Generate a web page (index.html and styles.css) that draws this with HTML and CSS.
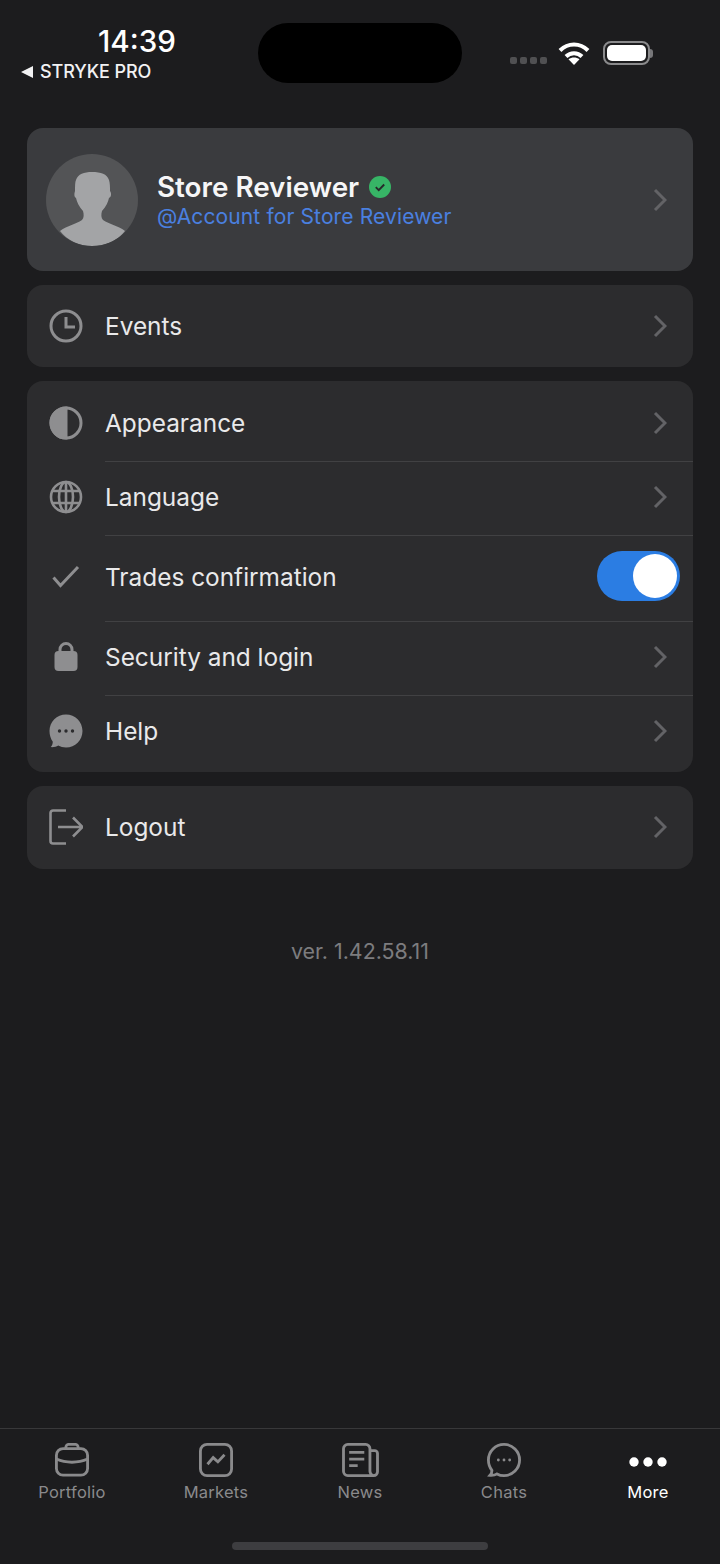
FILE: index.html
```html
<!DOCTYPE html>
<html lang="en">
<head>
  <meta charset="UTF-8">
  <meta name="viewport" content="width=device-width, initial-scale=1.0">
  <title>More</title>
  <link rel="stylesheet" href="styles.css">
</head>
<body>
  <header class="status-bar">
    <div class="status-left">
      <div class="clock">14:39</div>
      <div class="back-app"><span class="back-arrow"></span>STRYKE PRO</div>
    </div>
    <div class="island"></div>
    <div class="status-right">
      <div class="signal"><i></i><i></i><i></i><i></i></div>
      <svg class="wifi" width="32" height="24" viewBox="0 0 32 24" fill="none" stroke="#fff" stroke-width="4">
        <path d="M2 9.500C10 1.500 22 1.500 30 9.500"/>
        <path d="M8 15.500C12.500 11 19.500 11 24 15.500"/>
        <path d="M16 24l-5.500-5.700c3.200-2.400 7.800-2.400 11 0z" fill="#fff" stroke="none"/>
      </svg>
      <div class="battery"><div class="battery-fill"></div></div>
      <div class="battery-cap"></div>
    </div>
  </header>

  <main class="content">
    <a class="card profile">
      <div class="avatar">
        <svg width="92" height="92" viewBox="0 0 92 92">
          <path fill="#a3a4a6" d="M14 77C20 72 30 70 36 66C38 64 38 60 37 57C33 53 31 48 30 44C28 43 28 40 29 37C29 32 29 28 30 26C32 20 38 18 46 18C55 18 61 20 63 26C64 29 64 33 64 37C66 40 65 43 63 44C62 48 60 53 56 57C55 60 55 64 57 66C63 70 73 72 79 77C72 86 60 92 46 92C33 92 21 86 14 77z"/>
        </svg>
      </div>
      <div class="profile-text">
        <div class="profile-name">Store Reviewer
          <svg class="verified" width="22" height="22" viewBox="0 0 22 22">
            <circle cx="11" cy="11" r="11" fill="#37b566"/>
            <path d="M6.800 11.200l2.900 2.900 5.500-5.600" fill="none" stroke="#26292a" stroke-width="1.900"/>
          </svg>
        </div>
        <div class="profile-handle">@Account for Store Reviewer</div>
      </div>
      <svg class="chevron" width="14" height="24" viewBox="0 0 14 24"><path d="M2 2l10 10L2 22"/></svg>
    </a>

    <section class="card">
      <a class="row row-events">
        <svg class="row-icon" width="34" height="34" viewBox="0 0 34 34" fill="none" stroke="#8e8e90" stroke-width="3">
          <circle cx="17" cy="17" r="15"/><path d="M17 8v10h9"/>
        </svg>
        <span class="row-label">Events</span>
        <svg class="chevron" width="14" height="24" viewBox="0 0 14 24"><path d="M2 2l10 10L2 22"/></svg>
      </a>
    </section>

    <section class="card">
      <a class="row row-first">
        <svg class="row-icon" width="34" height="34" viewBox="0 0 34 34" fill="none" stroke="#8e8e90" stroke-width="3">
          <circle cx="17" cy="17" r="15"/><path d="M17 2a15 15 0 0 0 0 30z" fill="#8e8e90"/>
        </svg>
        <span class="row-label">Appearance</span>
        <svg class="chevron" width="14" height="24" viewBox="0 0 14 24"><path d="M2 2l10 10L2 22"/></svg>
      </a>
      <a class="row row-short">
        <svg class="row-icon" width="34" height="34" viewBox="0 0 34 34" fill="none" stroke="#8e8e90" stroke-width="2.600">
          <circle cx="17" cy="17" r="15"/>
          <ellipse cx="17" cy="17" rx="7" ry="15"/>
          <path d="M17 2v30M4 11h26M4 23h26"/>
        </svg>
        <span class="row-label">Language</span>
        <svg class="chevron" width="14" height="24" viewBox="0 0 14 24"><path d="M2 2l10 10L2 22"/></svg>
      </a>
      <div class="row row-trades">
        <svg class="row-icon" width="34" height="34" viewBox="0 0 34 34" fill="none" stroke="#8e8e90" stroke-width="3">
          <path d="M4.500 17.500l7 8L29 7"/>
        </svg>
        <span class="row-label">Trades confirmation</span>
        <div class="toggle"><div class="toggle-knob"></div></div>
      </div>
      <a class="row row-short">
        <svg class="row-icon" width="34" height="34" viewBox="0 0 34 34">
          <path d="M11 12V9.500a6 6 0 0 1 12 0V12" fill="none" stroke="#8e8e90" stroke-width="3"/>
          <rect x="5.500" y="11" width="23" height="20" rx="4" fill="#8e8e90"/>
        </svg>
        <span class="row-label">Security and login</span>
        <svg class="chevron" width="14" height="24" viewBox="0 0 14 24"><path d="M2 2l10 10L2 22"/></svg>
      </a>
      <a class="row row-help">
        <svg class="row-icon" width="34" height="34" viewBox="0 0 34 34">
          <path fill="#8e8e90" d="M17 .5c9.200 0 16.500 7.300 16.500 16.500S26.200 33.500 17 33.500c-3 0-5.500-.7-7.800-2-1.800 1.200-4.200 1.800-7.500 1.600 1.400-1.500 2-3.200 2.100-5.400C1.700 24.800.5 21.200.5 17 .5 7.800 7.800.5 17 .5z"/>
          <g fill="#2c2c2e"><circle cx="10.500" cy="17" r="1.700"/><circle cx="17" cy="17" r="1.700"/><circle cx="23.500" cy="17" r="1.700"/></g>
        </svg>
        <span class="row-label">Help</span>
        <svg class="chevron" width="14" height="24" viewBox="0 0 14 24"><path d="M2 2l10 10L2 22"/></svg>
      </a>
    </section>

    <section class="card">
      <a class="row row-logout">
        <svg class="row-icon" width="34" height="36" viewBox="0 0 34 36" fill="none" stroke="#8e8e90" stroke-width="2.600">
          <path d="M17 1.500H4a2.500 2.500 0 0 0-2.500 2.500v28A2.500 2.500 0 0 0 4 34.500h13"/>
          <path d="M9 18h24M24 8.500l9.500 9.500-9.500 9.500"/>
        </svg>
        <span class="row-label">Logout</span>
        <svg class="chevron" width="14" height="24" viewBox="0 0 14 24"><path d="M2 2l10 10L2 22"/></svg>
      </a>
    </section>

    <p class="version">ver. 1.42.58.11</p>
  </main>

  <nav class="tabbar">
    <a class="tab">
      <svg width="34" height="34" viewBox="0 0 36 36" fill="none" stroke="#8a8a8c" stroke-width="3">
        <rect x="1.500" y="6" width="33" height="28" rx="7"/>
        <path d="M1.500 17c10 4.500 23 4.500 33 0M11.500 6V4.500a3 3 0 0 1 3-3h7a3 3 0 0 1 3 3V6"/>
      </svg>
      <span>Portfolio</span>
    </a>
    <a class="tab">
      <svg width="34" height="34" viewBox="0 0 36 36" fill="none" stroke="#8a8a8c" stroke-width="3">
        <rect x="1.500" y="1.500" width="33" height="33" rx="7"/>
        <path d="M9 22.500l6-7 5 4.500 7-7.500"/>
      </svg>
      <span>Markets</span>
    </a>
    <a class="tab">
      <svg width="37" height="34" viewBox="0 0 39 36" fill="none" stroke="#8a8a8c" stroke-width="3">
        <path d="M33 34.500H6A4.500 4.500 0 0 1 1.500 30V6A4.500 4.500 0 0 1 6 1.500h19A4.500 4.500 0 0 1 29.500 6v24a4.500 4.500 0 0 0 4 4.500 4 4 0 0 0 4-4V11a3 3 0 0 0-3-3h-5"/>
        <path d="M7.500 10h16M7.500 17h16M7.500 24h9"/>
      </svg>
      <span>News</span>
    </a>
    <a class="tab">
      <svg width="34" height="34" viewBox="0 0 36 36" fill="none" stroke="#8a8a8c" stroke-width="3">
        <path d="M18 1.500c9.100 0 16.500 7.400 16.500 16.500S27.100 34.500 18 34.500c-2.700 0-5.200-.6-7.400-1.800-2 1.300-4.400 1.700-7.400 1.500 1.400-1.600 2-3.200 2-5.200C2.900 26 1.500 22.200 1.500 18 1.500 8.900 8.900 1.500 18 1.500z"/>
        <g fill="#8a8a8c" stroke="none"><circle cx="12" cy="18" r="1.500"/><circle cx="18" cy="18" r="1.500"/><circle cx="24" cy="18" r="1.500"/></g>
      </svg>
      <span>Chats</span>
    </a>
    <a class="tab tab-active">
      <svg width="38" height="34" viewBox="0 0 38 34" fill="#fff">
        <circle cx="5" cy="19" r="4.700"/><circle cx="19" cy="19" r="4.700"/><circle cx="33" cy="19" r="4.700"/>
      </svg>
      <span>More</span>
    </a>
  </nav>
  <div class="home-area"><div class="home-indicator"></div></div>
</body>
</html>
```

FILE: styles.css
```css
* {
  box-sizing: border-box;
}
html, body {
  margin: 0;
  height: 1564px;
}
body {
  display: flex;
  flex-direction: column;
  overflow: hidden;
  background: #1c1c1e;
  color: #f2f2f3;
  font-family: Inter, "Liberation Sans", sans-serif;
}

/* status bar */
.status-bar {
  display: flex;
  height: 128px;
  padding-top: 23px;
}
.status-left {
  width: 258px;
  padding-left: 21px;
}
.clock {
  margin-left: 77px;
  font-size: 29.6px;
  font-weight: 500;
  line-height: 36px;
  color: #fff;
}
.back-app {
  display: flex;
  align-items: center;
  gap: 7px;
  font-size: 18px;
  font-weight: 500;
  line-height: 26px;
  letter-spacing: -0.1px;
  color: #f2f2f3;
}
.back-arrow {
  width: 0;
  height: 0;
  border-top: 6px solid transparent;
  border-bottom: 6px solid transparent;
  border-right: 12px solid #f2f2f3;
}
.island {
  width: 204px;
  height: 60px;
  border-radius: 30px;
  background: #000;
}
.status-right {
  display: flex;
  align-items: center;
  height: 60px;
  padding-left: 48px;
}
.signal {
  display: flex;
  gap: 3px;
  margin-top: 15px;
}
.signal i {
  width: 7px;
  height: 7px;
  border-radius: 2px;
  background: #505052;
}
.wifi {
  margin-left: 11px;
}
.battery {
  width: 47px;
  height: 24px;
  margin-left: 13px;
  padding: 2px;
  border: 2px solid #8a8a8c;
  border-radius: 8px;
}
.battery-fill {
  height: 100%;
  border-radius: 5px;
  background: #fff;
}
.battery-cap {
  width: 3px;
  height: 9px;
  border-radius: 0 3px 3px 0;
  background: #77777a;
}

/* menu */
.content {
  flex: 1;
  display: flex;
  flex-direction: column;
  gap: 14px;
  padding: 0 27px;
}
.card {
  display: block;
  border-radius: 16px;
  background: #2c2c2e;
}
.profile {
  display: flex;
  align-items: center;
  height: 143px;
  padding: 0 26px 0 19px;
  background: #3a3b3e;
}
.avatar {
  width: 92px;
  height: 92px;
  border-radius: 50%;
  background: #535456;
  overflow: hidden;
}
.avatar svg {
  display: block;
}
.profile-text {
  flex: 1;
  margin-left: 19px;
  margin-top: 1px;
}
.profile-name {
  display: flex;
  align-items: center;
  gap: 10px;
  font-size: 27.8px;
  font-weight: 600;
  line-height: 32px;
  color: #f6f6f7;
}
.profile-handle {
  margin-top: 1px;
  font-size: 21px;
  line-height: 26px;
  letter-spacing: 0.13px;
  color: #4a80e0;
}
.chevron {
  flex: none;
  fill: none;
  stroke: #636366;
  stroke-width: 3;
}
.row {
  display: flex;
  align-items: center;
  position: relative;
  padding: 0 26px 0 22px;
}
.row + .row::before {
  content: "";
  position: absolute;
  top: 0;
  left: 78px;
  right: 0;
  height: 1px;
  background: #414143;
}
.row-events {
  height: 82px;
}
.row-logout {
  height: 83px;
  padding-bottom: 1px;
}
.row-first {
  height: 80px;
  padding-top: 3px;
}
.row-short {
  height: 74px;
  padding-bottom: 2px;
}
.row-trades {
  height: 86px;
  padding-right: 13px;
  padding-bottom: 2px;
}
.row-help {
  height: 77px;
  padding-bottom: 5px;
}
.row-icon {
  flex: none;
}
.row-label {
  flex: 1;
  margin-left: 22px;
  font-size: 24.4px;
  line-height: 30px;
  color: #e9e9ea;
}
.toggle {
  width: 83px;
  height: 50px;
  margin-bottom: 2px;
  padding: 3px;
  border-radius: 25px;
  background: #2b7de3;
}
.toggle-knob {
  width: 44px;
  height: 44px;
  margin-left: 33px;
  border-radius: 50%;
  background: #fff;
}
.version {
  margin: 54px 0 0;
  font-size: 21.4px;
  line-height: 28px;
  text-align: center;
  color: #7c7c7f;
}

/* tab bar */
.tabbar {
  display: grid;
  grid-template-columns: repeat(5, 1fr);
  height: 88px;
  padding-top: 14px;
  border-top: 1px solid #38383a;
  background: #1c1c1e;
}
.tab {
  display: flex;
  flex-direction: column;
  align-items: center;
  gap: 3px;
  font-size: 16.5px;
  line-height: 24px;
  letter-spacing: 0.25px;
  color: #8a8a8c;
}
.tab svg {
  display: block;
}
.tab-active {
  color: #fff;
}
.home-area {
  display: flex;
  justify-content: center;
  height: 48px;
  padding-top: 26px;
}
.home-indicator {
  width: 256px;
  height: 8px;
  border-radius: 4px;
  background: #3d3d40;
}
```
